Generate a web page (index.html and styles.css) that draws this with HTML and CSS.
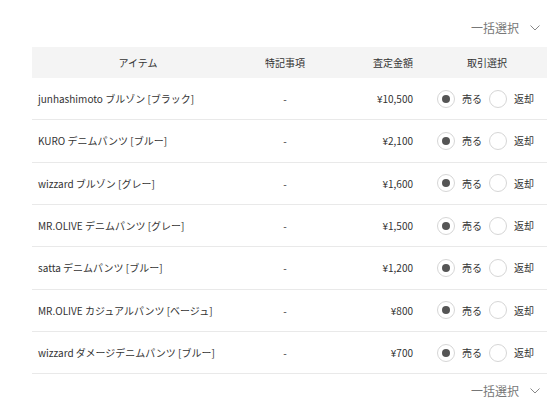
FILE: index.html
```html
<!DOCTYPE html>
<html lang="ja">
<head>
<meta charset="utf-8">
<link rel="stylesheet" href="styles.css">
</head>
<body>
<div class="wrap">
  <div class="bulk bulk-top"><span>一括選択</span><svg class="chev" width="10" height="6" viewBox="0 0 10 6"><path d="M0.5 0.5 L5 5 L9.5 0.5" fill="none" stroke="#888" stroke-width="1"/></svg></div>
  <div class="table">
    <div class="row head">
      <div class="c-item">アイテム</div>
      <div class="c-note">特記事項</div>
      <div class="c-amt">査定金額</div>
      <div class="c-act">取引選択</div>
    </div>
    <div class="row">
      <div class="c-item">junhashimoto ブルゾン [ブラック]</div>
      <div class="c-note">-</div>
      <div class="c-amt">¥10,500</div>
      <div class="c-act"><span class="radio on"></span><span class="lbl">売る</span><span class="radio"></span><span class="lbl">返却</span></div>
    </div>
    <div class="row">
      <div class="c-item">KURO デニムパンツ [ブルー]</div>
      <div class="c-note">-</div>
      <div class="c-amt">¥2,100</div>
      <div class="c-act"><span class="radio on"></span><span class="lbl">売る</span><span class="radio"></span><span class="lbl">返却</span></div>
    </div>
    <div class="row">
      <div class="c-item">wizzard ブルゾン [グレー]</div>
      <div class="c-note">-</div>
      <div class="c-amt">¥1,600</div>
      <div class="c-act"><span class="radio on"></span><span class="lbl">売る</span><span class="radio"></span><span class="lbl">返却</span></div>
    </div>
    <div class="row">
      <div class="c-item">MR.OLIVE デニムパンツ [グレー]</div>
      <div class="c-note">-</div>
      <div class="c-amt">¥1,500</div>
      <div class="c-act"><span class="radio on"></span><span class="lbl">売る</span><span class="radio"></span><span class="lbl">返却</span></div>
    </div>
    <div class="row">
      <div class="c-item">satta デニムパンツ [ブルー]</div>
      <div class="c-note">-</div>
      <div class="c-amt">¥1,200</div>
      <div class="c-act"><span class="radio on"></span><span class="lbl">売る</span><span class="radio"></span><span class="lbl">返却</span></div>
    </div>
    <div class="row">
      <div class="c-item">MR.OLIVE カジュアルパンツ [ベージュ]</div>
      <div class="c-note">-</div>
      <div class="c-amt">¥800</div>
      <div class="c-act"><span class="radio on"></span><span class="lbl">売る</span><span class="radio"></span><span class="lbl">返却</span></div>
    </div>
    <div class="row">
      <div class="c-item">wizzard ダメージデニムパンツ [ブルー]</div>
      <div class="c-note">-</div>
      <div class="c-amt">¥700</div>
      <div class="c-act"><span class="radio on"></span><span class="lbl">売る</span><span class="radio"></span><span class="lbl">返却</span></div>
    </div>
  </div>
  <div class="bulk bulk-bottom"><span>一括選択</span><svg class="chev" width="10" height="6" viewBox="0 0 10 6"><path d="M0.5 0.5 L5 5 L9.5 0.5" fill="none" stroke="#888" stroke-width="1"/></svg></div>
</div>
</body>
</html>
```

FILE: styles.css
```css
html, body {
  margin: 0;
  padding: 0;
  background: #fff;
}
body {
  font-family: "Noto Sans CJK JP", "Noto Sans", sans-serif;
  color: #333;
  font-size: 10px;
}
.wrap {
  width: 515px;
  margin-left: 32px;
}
.bulk {
  display: flex;
  justify-content: flex-end;
  align-items: center;
  gap: 11px;
  padding-right: 7px;
  height: 20px;
  font-size: 12px;
  color: #777;
}
.bulk-top {
  margin-top: 17px;
  margin-bottom: 10px;
}
.bulk-bottom {
  margin-top: 6px;
}
.chev {
  display: block;
  margin-top: 1px;
}
.row {
  display: grid;
  grid-template-columns: 212px 82px 101px 120px;
  align-items: center;
  height: 42.33px;
  box-sizing: border-box;
  border-bottom: 1px solid #e9e9e9;
}
.row.head {
  height: 31px;
  background: #f4f4f4;
  border-bottom: none;
  color: #333;
}
.c-item {
  padding-left: 6px;
  white-space: nowrap;
}
.head .c-item {
  padding-left: 0;
  text-align: center;
}
.c-note {
  text-align: center;
}
.c-amt {
  text-align: right;
  padding-right: 14px;
}
.c-act {
  display: flex;
  align-items: center;
  justify-content: center;
}
.row:not(.head) .c-act {
  justify-content: flex-start;
  padding-left: 10px;
}
.radio {
  width: 18px;
  height: 18px;
  box-sizing: border-box;
  border: 1px solid #d6d6d6;
  border-radius: 50%;
  display: flex;
  align-items: center;
  justify-content: center;
  background: #fff;
}
.radio.on::after {
  content: "";
  width: 8px;
  height: 8px;
  border-radius: 50%;
  background: #555;
}
.lbl {
  margin-left: 7px;
  margin-right: 7px;
}
```
